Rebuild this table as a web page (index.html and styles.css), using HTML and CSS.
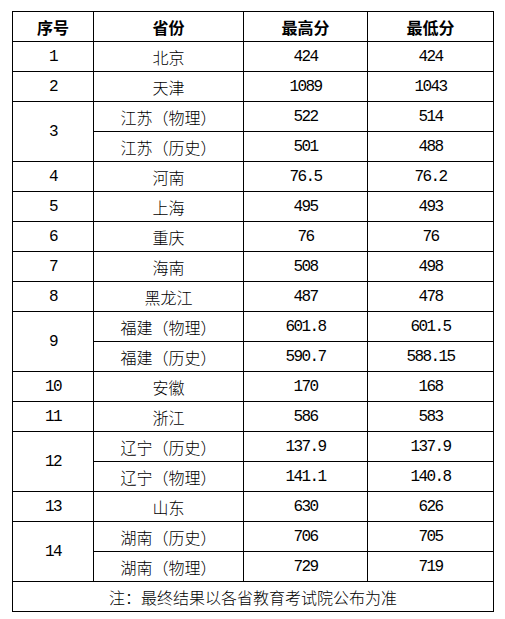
FILE: index.html
```html
<!DOCTYPE html>
<html lang="zh">
<head>
<meta charset="utf-8">
<link rel="stylesheet" href="styles.css">
</head>
<body>
<div class="wrap">
<table class="score">
<colgroup>
<col class="c1"><col class="c2"><col class="c3"><col class="c4">
</colgroup>
<thead>
<tr><th>序号</th><th>省份</th><th>最高分</th><th>最低分</th></tr>
</thead>
<tbody>
<tr><td class="n">1</td><td>北京</td><td class="n">424</td><td class="n">424</td></tr>
<tr><td class="n">2</td><td>天津</td><td class="n">1089</td><td class="n">1043</td></tr>
<tr><td class="n" rowspan="2">3</td><td>江苏（物理）</td><td class="n">522</td><td class="n">514</td></tr>
<tr><td>江苏（历史）</td><td class="n">501</td><td class="n">488</td></tr>
<tr><td class="n">4</td><td>河南</td><td class="n">76.5</td><td class="n">76.2</td></tr>
<tr><td class="n">5</td><td>上海</td><td class="n">495</td><td class="n">493</td></tr>
<tr><td class="n">6</td><td>重庆</td><td class="n">76</td><td class="n">76</td></tr>
<tr><td class="n">7</td><td>海南</td><td class="n">508</td><td class="n">498</td></tr>
<tr><td class="n">8</td><td>黑龙江</td><td class="n">487</td><td class="n">478</td></tr>
<tr><td class="n" rowspan="2">9</td><td>福建（物理）</td><td class="n">601.8</td><td class="n">601.5</td></tr>
<tr><td>福建（历史）</td><td class="n">590.7</td><td class="n">588.15</td></tr>
<tr><td class="n">10</td><td>安徽</td><td class="n">170</td><td class="n">168</td></tr>
<tr><td class="n">11</td><td>浙江</td><td class="n">586</td><td class="n">583</td></tr>
<tr><td class="n" rowspan="2">12</td><td>辽宁（历史）</td><td class="n">137.9</td><td class="n">137.9</td></tr>
<tr><td>辽宁（物理）</td><td class="n">141.1</td><td class="n">140.8</td></tr>
<tr><td class="n">13</td><td>山东</td><td class="n">630</td><td class="n">626</td></tr>
<tr><td class="n" rowspan="2">14</td><td>湖南（历史）</td><td class="n">706</td><td class="n">705</td></tr>
<tr><td>湖南（物理）</td><td class="n">729</td><td class="n">719</td></tr>
<tr><td colspan="4">注：最终结果以各省教育考试院公布为准</td></tr>
</tbody>
</table>
</div>
</body>
</html>
```
FILE: styles.css
```css
html, body {
  margin: 0;
  padding: 0;
  background: #fff;
}
.wrap {
  padding: 11px 12px 0 12px;
}
.score {
  border-collapse: collapse;
  table-layout: fixed;
  width: 481px;
  font-family: "Noto Sans CJK SC", sans-serif;
  font-size: 16px;
  color: #000;
}
.c1 { width: 81px; }
.c2 { width: 150px; }
.c3 { width: 124px; }
.c4 { width: 126px; }
.score tr {
  height: 30px;
}
.score th,
.score td {
  border: 1px solid #000;
  padding: 0;
  text-align: center;
  vertical-align: middle;
  line-height: 18px;
  font-weight: 300;
}
.score th {
  font-weight: bold;
}
.score td.n {
  font-family: "Liberation Mono", monospace;
  font-size: 16px;
  letter-spacing: -1.6px;
  font-weight: normal;
}
```
